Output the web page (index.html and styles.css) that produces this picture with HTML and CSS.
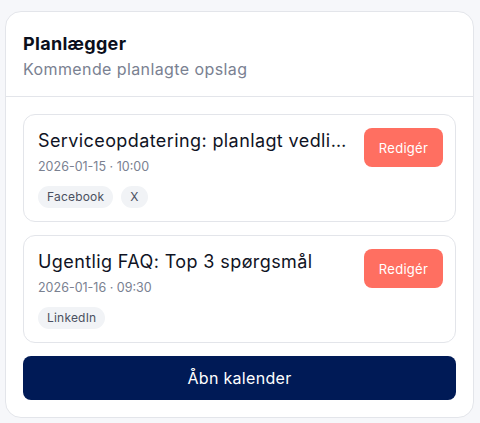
FILE: index.html
```html
<!DOCTYPE html>
<html lang="da">
<head>
<meta charset="utf-8">
<link rel="stylesheet" href="styles.css">
</head>
<body>
<section class="panel">
  <header class="panel-head">
    <h1 class="panel-title">Planlægger</h1>
    <p class="panel-sub">Kommende planlagte opslag</p>
  </header>
  <div class="panel-body">
    <article class="post">
      <div class="post-main">
        <h2 class="post-title">Serviceopdatering: planlagt vedligeholdelse</h2>
        <div class="post-time">2026-01-15 · 10:00</div>
        <div class="chips"><span class="chip">Facebook</span><span class="chip">X</span></div>
      </div>
      <button class="edit">Redigér</button>
    </article>
    <article class="post">
      <div class="post-main">
        <h2 class="post-title">Ugentlig FAQ: Top 3 spørgsmål</h2>
        <div class="post-time">2026-01-16 · 09:30</div>
        <div class="chips"><span class="chip">LinkedIn</span></div>
      </div>
      <button class="edit">Redigér</button>
    </article>
    <button class="calendar">Åbn kalender</button>
  </div>
</section>
</body>
</html>
```
FILE: styles.css
```css
* { box-sizing: border-box; }
html, body { margin: 0; }
body {
  background: #f6f7fa;
  padding: 11px 6px 5px 5px;
  font-family: Inter, "DejaVu Sans", sans-serif;
  color: #0f1324;
}
.panel {
  background: #fff;
  border: 1px solid #e3e5ea;
  border-radius: 16px;
  height: 407px;
  overflow: hidden;
}
.panel-head {
  padding: 21px 17px 0 17px;
  height: 85px;
  border-bottom: 1px solid #e3e5ea;
}
.panel-title {
  margin: 0;
  font-size: 18px;
  font-weight: 700;
  line-height: 22px;
  letter-spacing: 0.3px;
  color: #0b0f1c;
}
.panel-sub {
  margin: 4px 0 0 0;
  font-size: 16px;
  line-height: 20px;
  letter-spacing: 0.4px;
  color: #7a8191;
}
.panel-body {
  padding: 17px 17px 17px 17px;
  display: flex;
  flex-direction: column;
  gap: 13px;
}
.post {
  border: 1px solid #e3e5ea;
  border-radius: 12px;
  padding: 13px 12px 13px 14px;
  display: flex;
  gap: 16px;
  align-items: flex-start;
}
.post-main { flex: 1; min-width: 0; }
.post-title {
  margin: 0;
  font-size: 18px;
  font-weight: 400;
  line-height: 26px;
  letter-spacing: 0.4px;
  white-space: nowrap;
  overflow: hidden;
  text-overflow: ellipsis;
  color: #0f1324;
}
.post-time {
  margin-top: 4px;
  font-size: 12.5px;
  line-height: 18px;
  color: #7a8191;
}
.chips {
  margin-top: 10px;
  display: flex;
  gap: 8px;
}
.chip {
  background: #f1f3f6;
  border-radius: 11px;
  height: 22px;
  line-height: 22px;
  padding: 0 9px;
  font-size: 12px;
  letter-spacing: 0.2px;
  color: #4a5060;
}
.edit {
  flex: none;
  width: 79px;
  height: 39px;
  border: 0;
  border-radius: 8px;
  background: #ff6f61;
  color: #fff;
  font-family: inherit;
  font-size: 13px;
  font-weight: 400;
  letter-spacing: 0.3px;
}
.calendar {
  margin-top: 0;
  height: 44px;
  border: 0;
  border-radius: 8px;
  background: #001a56;
  color: #fff;
  font-family: inherit;
  font-size: 16px;
  font-weight: 400;
  letter-spacing: 0.3px;
}
```
